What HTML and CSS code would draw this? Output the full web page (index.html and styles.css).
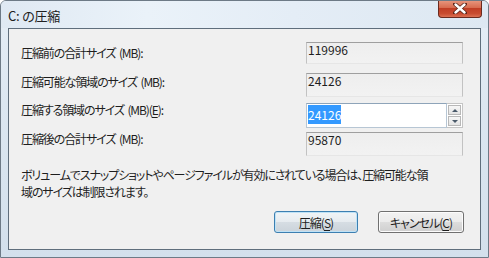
FILE: index.html
```html
<!doctype html>
<html lang="ja">
<head>
	<meta charset="UTF-8">
	<title>C: の圧縮</title>
	<link rel="stylesheet" href="styles.css">
</head>
<body>
	<div class="window">
		<div class="titlebar">
			<span class="title">C: の圧縮</span>
			<div class="close">
				<svg width="14" height="11" viewBox="0 0 14 11">
					<path d="M2 1 L12 10 M12 1 L2 10" stroke="#5a2418" stroke-width="4" stroke-linecap="round"/>
					<path d="M2.5 1.5 L11.5 9.5 M11.5 1.5 L2.5 9.5" stroke="#fff" stroke-width="2.4" stroke-linecap="round"/>
				</svg>
			</div>
		</div>
		<div class="client">
			<div class="fields">
				<div class="labels">
					<div>圧縮前の合計サイズ (MB):</div>
					<div>圧縮可能な領域のサイズ (MB):</div>
					<div>圧縮する領域のサイズ (MB)(<u>E</u>):</div>
					<div>圧縮後の合計サイズ (MB):</div>
				</div>
				<div class="values">
					<div class="static s1">119996</div>
					<div class="static s2">24126</div>
					<div class="spin">
						<div class="edit"><span class="sel">24126</span></div>
						<div class="arrows">
							<span class="arrow up"></span>
							<span class="arrow down"></span>
						</div>
					</div>
					<div class="static s4">95870</div>
				</div>
			</div>
			<p class="note">ボリュームでスナップショットやページファイルが有効にされている場合は、圧縮可能な領<br>域のサイズは制限されます。</p>
			<div class="buttons">
				<button class="btn default">圧縮(<u>S</u>)</button>
				<button class="btn">キャンセル(<u>C</u>)</button>
			</div>
		</div>
	</div>
</body>
</html>
```

FILE: styles.css
```css
* {
	box-sizing: border-box;
}
body {
	margin: 0;
	font-family: "Noto Sans CJK JP", sans-serif;
	font-size: 12px;
	font-feature-settings: "palt";
	color: #1e1e1e;
}
.window {
	width: 489px;
	height: 258px;
	border: 1px solid #6d7a86;
	border-radius: 6px 6px 0 0;
	background: linear-gradient(180deg, #e6eef6 0%, #dce7f1 40%, #d3e0ec 100%);
	overflow: hidden;
}
.titlebar {
	display: flex;
	height: 27px;
	background: linear-gradient(90deg, #dfe9f3 0%, #eaf2f9 30%, #e4edf6 60%, #dde8f2 100%);
}
.title {
	padding: 5px 0 0 7px;
	font-size: 13px;
	letter-spacing: -0.2px;
	color: #202020;
}
.close {
	display: flex;
	align-items: center;
	justify-content: center;
	flex: none;
	width: 44px;
	height: 18px;
	margin: -1px 6px 0 auto;
	border: 1px solid #6a2b1f;
	border-top: none;
	border-radius: 0 0 4px 4px;
	background-color: #c8472c;
	background-image: linear-gradient(180deg, #e99a82 0%, #d86c50 45%, #c03e25 50%, #c84c30 80%, #dc7052 100%);
}
.client {
	height: 222px;
	margin: 0 7px;
	padding: 0 16px 0 12px;
	border: 1px solid #5f6e7c;
	background-color: #f0f0f0;
}
.fields {
	display: flex;
}
.labels {
	display: flex;
	flex-direction: column;
	gap: 12.5px;
	width: 285px;
	padding-top: 16px;
}
.labels div {
	line-height: 16px;
	letter-spacing: -1.1px;
	word-spacing: 2px;
}
.values {
	display: flex;
	flex-direction: column;
	width: 157px;
	padding-top: 13px;
}
.static {
	padding: 0 1px;
	line-height: 13px;
	border: 1px solid #c2c2c2;
	border-top-color: #9f9f9f;
	border-bottom-color: #e6e6e6;
	background: linear-gradient(180deg, #eeeeee, #f2f2f2);
}
.s1 { height: 22px; }
.s2 { height: 24px; margin-top: 9px; }
.s4 { height: 24px; margin-top: 4px; }
.spin {
	display: flex;
	height: 25px;
	margin-top: 6px;
}
.edit {
	flex: 1;
	padding: 3px 1px 0;
	border: 1px solid #b7c6d4;
	border-top-color: #8ea4b9;
	background-color: #fff;
	line-height: 16px;
}
.sel {
	background-color: #3399ff;
	color: #fff;
	padding: 1px 0;
}
.arrows {
	display: flex;
	flex-direction: column;
	width: 16px;
	border: 1px solid #c5c5c5;
	border-left: none;
	background-color: #fff;
	padding: 1px;
	gap: 1px;
}
.arrow {
	flex: 1;
	display: flex;
	align-items: center;
	justify-content: center;
	border: 1px solid #b8b8b8;
	background: linear-gradient(180deg, #f7f7f7, #e4e4e4);
}
.arrow::after {
	content: "";
	border-left: 3px solid transparent;
	border-right: 3px solid transparent;
}
.up::after {
	border-bottom: 3px solid #4a5a6a;
}
.down::after {
	border-top: 3px solid #4a5a6a;
}
.note {
	margin: 10px 0 0;
	line-height: 17px;
	letter-spacing: -1.1px;
}
.buttons {
	display: flex;
	justify-content: flex-end;
	gap: 20px;
	margin-top: 11px;
}
.btn {
	height: 22px;
	padding: 0;
	font-family: inherit;
	font-size: 12px;
	font-feature-settings: "palt";
	letter-spacing: -1px;
	color: #1e1e1e;
	border: 1px solid #707070;
	border-radius: 3px;
	background: linear-gradient(180deg, #f2f2f2 0%, #ebebeb 50%, #dddddd 51%, #cfcfcf 100%);
	box-shadow: inset 0 0 0 1px #fcfcfc;
}
.btn.default {
	width: 84px;
	border-color: #3c7fb1;
	background: linear-gradient(180deg, #f0f4f7 0%, #e6ebef 50%, #d6dde3 51%, #cbd3da 100%);
	box-shadow: inset 0 0 0 1px #bfe2f6;
}
.btn:not(.default) {
	width: 86px;
}
u {
	text-underline-offset: 2px;
}
```
